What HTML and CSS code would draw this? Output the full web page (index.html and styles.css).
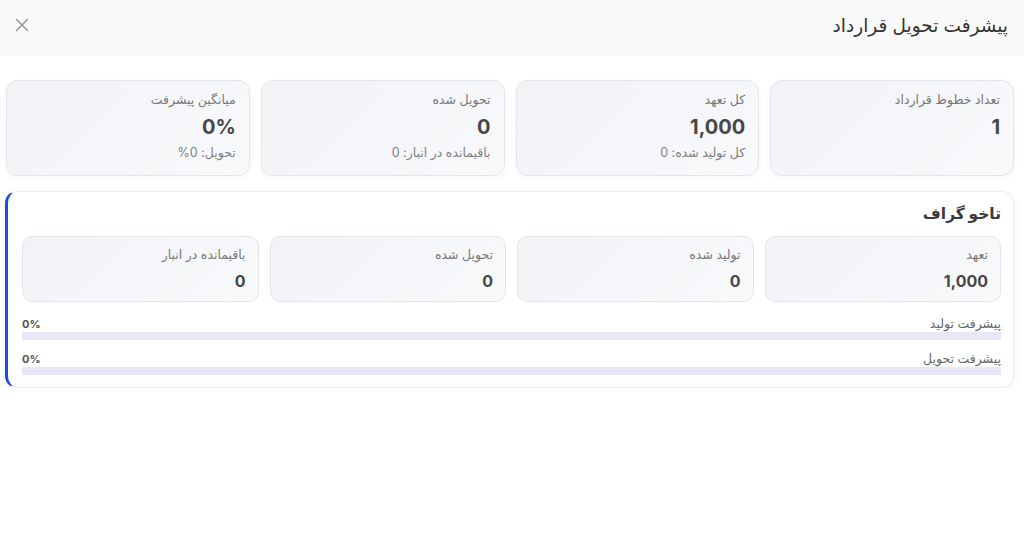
FILE: index.html
```html
<!DOCTYPE html>
<html lang="fa" dir="rtl">
<head>
<meta charset="utf-8">
<title>پیشرفت تحویل قرارداد</title>
<link rel="stylesheet" href="styles.css">
</head>
<body>
<header class="top">
  <h1 class="title">پیشرفت تحویل قرارداد</h1>
  <button class="close" aria-label="close">
    <svg width="16" height="16" viewBox="0 0 16 16"><path d="M2.5 2.5L13.5 13.5M13.5 2.5L2.5 13.5" stroke="#8f8f8f" stroke-width="1.4" stroke-linecap="round"/></svg>
  </button>
</header>
<main class="content">
  <section class="stats">
    <div class="stat">
      <div class="label">تعداد خطوط قرارداد</div>
      <div class="value">1</div>
    </div>
    <div class="stat">
      <div class="label">کل تعهد</div>
      <div class="value">1,000</div>
      <div class="sub">کل تولید شده: 0</div>
    </div>
    <div class="stat">
      <div class="label">تحویل شده</div>
      <div class="value">0</div>
      <div class="sub">باقیمانده در انبار: 0</div>
    </div>
    <div class="stat">
      <div class="label">میانگین پیشرفت</div>
      <div class="value">0%</div>
      <div class="sub">تحویل: 0%</div>
    </div>
  </section>
  <section class="panel">
    <h2 class="panel-title">تاخو گراف</h2>
    <div class="minis">
      <div class="mini"><div class="label">تعهد</div><div class="mval">1,000</div></div>
      <div class="mini"><div class="label">تولید شده</div><div class="mval">0</div></div>
      <div class="mini"><div class="label">تحویل شده</div><div class="mval">0</div></div>
      <div class="mini"><div class="label">باقیمانده در انبار</div><div class="mval">0</div></div>
    </div>
    <div class="prog">
      <div class="prow"><span class="plabel">پیشرفت تولید</span><span class="pct">0%</span></div>
      <div class="bar"></div>
    </div>
    <div class="prog">
      <div class="prow"><span class="plabel">پیشرفت تحویل</span><span class="pct">0%</span></div>
      <div class="bar"></div>
    </div>
  </section>
</main>
</body>
</html>
```
FILE: styles.css
```css
* { box-sizing: border-box; }
html, body { margin: 0; padding: 0; background: #fff; }
body {
  font-family: Inter, "DejaVu Sans", sans-serif;
  color: #333;
  direction: rtl;
}
.top {
  height: 56px;
  background: #f9f9f9;
  display: flex;
  align-items: center;
  justify-content: space-between;
  padding: 0 16px 6px 12px;
}
.title {
  margin: 0;
  font-size: 18.5px;
  font-weight: 400;
  color: #333;
}
.close {
  background: none;
  border: 0;
  padding: 0;
  width: 20px;
  height: 20px;
  display: flex;
  align-items: center;
  justify-content: center;
}
.content {
  padding: 24px 10px 0 5px;
}
.stats {
  display: grid;
  grid-template-columns: repeat(4, 1fr);
  gap: 11px;
  margin-left: 1px;
}
.stat {
  height: 96px;
  border: 1px solid #e2e5eb;
  border-radius: 12px;
  background: linear-gradient(135deg, #f1f3f7, #f8f9fb);
  box-shadow: 0 2px 6px rgba(0,0,0,0.04);
  padding: 11px 13px 0;
  text-align: right;
}
.label {
  font-size: 12.5px;
  color: #777;
  line-height: 16px;
}
.value {
  font-size: 20px;
  font-weight: 700;
  color: #474747;
  line-height: 24px;
  margin-top: 7px;
}
.sub {
  font-size: 12.5px;
  color: #808080;
  line-height: 16px;
  margin-top: 6px;
}
.panel {
  margin-top: 15px;
  height: 197px;
  background: #fff;
  border-radius: 12px;
  border: 1px solid #eceef2;
  border-left: 3px solid #1f4fd6;
  box-shadow: 0 3px 10px rgba(0,0,0,0.05);
  padding: 11px 12px 0 14px;
}
.panel-title {
  margin: 0;
  font-size: 15.5px;
  font-weight: 700;
  color: #3a3a3a;
  line-height: 22px;
}
.minis {
  display: grid;
  grid-template-columns: repeat(4, 1fr);
  gap: 11px;
  margin-top: 11px;
}
.mini {
  height: 66px;
  border: 1px solid #e2e5eb;
  border-radius: 10px;
  background: linear-gradient(135deg, #f1f3f7, #f8f9fb);
  padding: 10px 12px 0;
}
.mval {
  font-size: 16px;
  font-weight: 700;
  color: #474747;
  line-height: 20px;
  margin-top: 8px;
}
.prog { margin-top: 14px; }
.prog + .prog { margin-top: 11px; }
.prow {
  display: flex;
  justify-content: space-between;
  align-items: flex-end;
  line-height: 16px;
}
.plabel { font-size: 12.5px; color: #666; }
.pct { font-size: 11px; font-weight: 700; color: #555; }
.bar {
  height: 8px;
  background: #e9e7f7;
  margin-top: 0;
}
```
